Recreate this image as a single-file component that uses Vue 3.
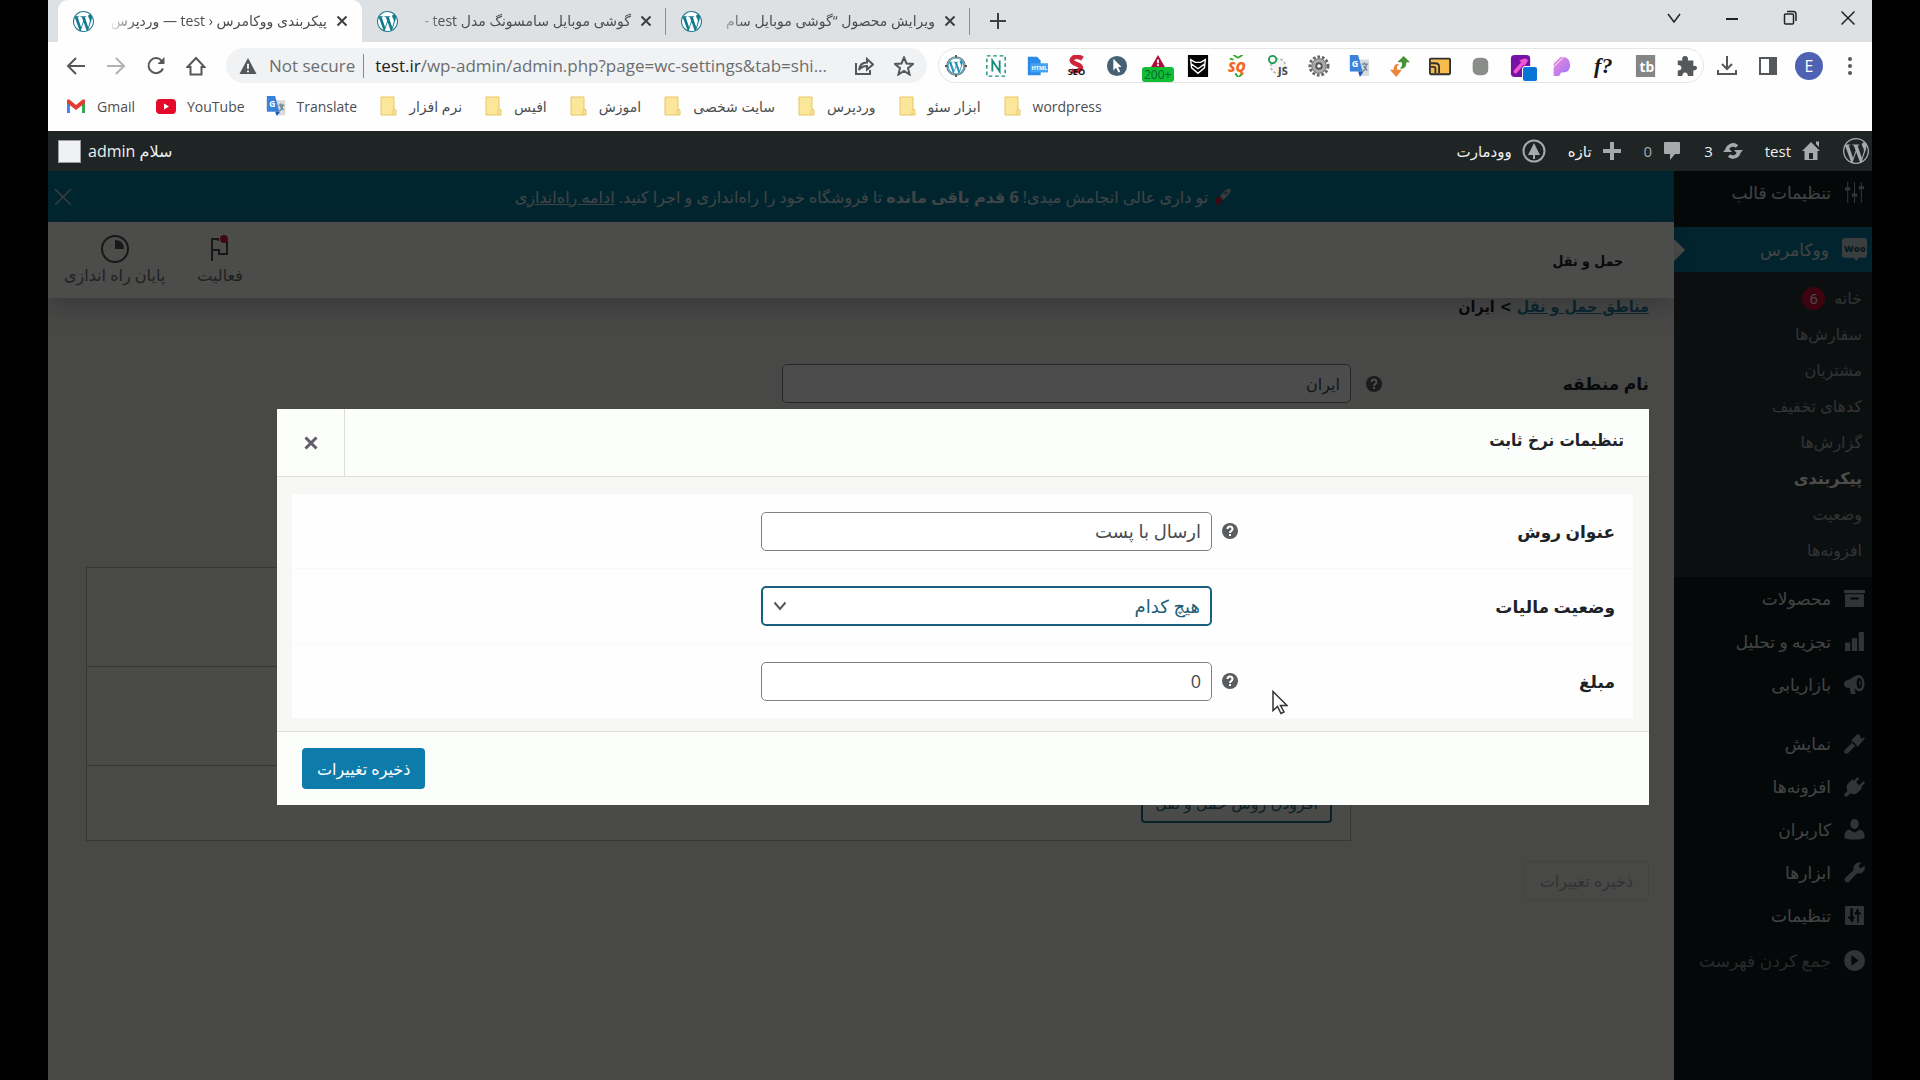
<script setup>
import { ref } from 'vue'

const wpLogo =
  'M21.469 6.825c.84 1.537 1.318 3.3 1.318 5.175 0 3.979-2.156 7.456-5.363 9.325l3.295-9.527c.615-1.54.82-2.771.82-3.864 0-.405-.026-.78-.07-1.11m-7.981.105c.647-.03 1.232-.105 1.232-.105.582-.075.514-.93-.067-.899 0 0-1.755.135-2.88.135-1.064 0-2.85-.15-2.85-.15-.585-.03-.661.855-.075.885 0 0 .54.061 1.125.09l1.68 4.605-2.37 7.08L5.354 6.9c.649-.03 1.234-.1 1.234-.1.585-.075.516-.93-.065-.896 0 0-1.746.138-2.874.138-.2 0-.438-.008-.69-.015C4.911 3.15 8.235 1.215 12 1.215c2.809 0 5.365 1.072 7.286 2.833-.046-.003-.091-.009-.141-.009-1.06 0-1.812.923-1.812 1.914 0 .89.513 1.643 1.06 2.531.411.72.89 1.643.89 2.977 0 .915-.354 1.994-.821 3.479l-1.075 3.585-3.9-11.61.001.014zM12 22.784c-1.059 0-2.081-.153-3.048-.437l3.237-9.406 3.315 9.087c.024.053.05.101.078.149-1.12.393-2.325.609-3.582.609M1.211 12c0-1.564.336-3.05.935-4.39L7.29 21.709C3.694 19.96 1.212 16.271 1.211 12M12 0C5.385 0 0 5.385 0 12s5.385 12 12 12 12-5.385 12-12S18.615 0 12 0'

const tabs = [
  { title: 'پیکربندی ووکامرس ‹ test — وردپرس', active: true },
  { title: 'گوشی موبایل سامسونگ مدل test -', active: false },
  { title: 'ویرایش محصول “گوشی موبایل سام', active: false },
]

const folders = ['نرم افزار', 'افیس', 'اموزش', 'سایت شخصی', 'وردپرس', 'ابزار سئو', 'wordpress']

const submenu = [
  { label: 'خانه', count: 6 },
  { label: 'سفارش‌ها' },
  { label: 'مشتریان' },
  { label: 'کدهای تخفیف' },
  { label: 'گزارش‌ها' },
  { label: 'پیکربندی', current: true },
  { label: 'وضعیت' },
  { label: 'افزونه‌ها' },
]

const storeMenu = [
  { label: 'محصولات', icon: 'M0 2h20v3H0zM1 6h18v12H1zm5 3v2h8V9z' },
  { label: 'تجزیه و تحلیل', icon: 'M1 11h5v8H1zM7.5 7h5v12h-5zM14 1h5v18h-5z' },
  {
    label: 'بازاریابی',
    icon: 'M14 1c3 0 5.5 3.6 5.500 8s-2 7.500-4.500 7.500c-2.200 0-3.600-1.700-5-3.200l1 5.700H6.500L5.500 13H3C1.300 13 0 11.500 0 9.800S1.300 6.500 3 6c4-1 7-5 11-5zm.3 2.500c-1.500 0-2.300 2-2.300 4.800 0 3 1.200 5.700 2.800 5.700s2.500-2.200 2.500-5-1.400-5.500-3-5.500zm.2 3c.9 0 1.500 1 1.500 2.300s-.5 2.200-1.300 2.200z',
  },
]

const systemMenu = [
  { label: 'نمایش', icon: 'M20 5l-7 8-2-1-7 7c-1 1-2.500 1-3.300.2s-.8-2.300.2-3.300L8 9 7 7l6-6 3 1.500L15 4l2 1.500L18.500 4zM8 7.500l4.500 4.500-1 1L7 8.500z' },
  { label: 'افزونه‌ها', icon: 'M13 1l1.500 1.500-3 3.500 3 2.800L18.500 5 20 6.500l-3.800 4.200 1 1-4 4c-2 2-5 2.200-7.200 1L3 19.500H.5V17l3-3C2 12 2 9 4.500 6.500L8 3l1.500 1.500z' },
  { label: 'کاربران', icon: 'M10 0c2.500 0 4 2 4 4.500S12.500 9.500 10 9.500 6 7 6 4.500 7.500 0 10 0zM5 10l5 3 5-3c3 .5 4.500 3 4.500 6v2c-3 2-16 2-19 0v-2c0-3 1.500-5.500 4.500-6z' },
  { label: 'ابزارها', icon: 'M17 5.500l2.500-2.200c1 3-.3 6-2.800 7.200-1.500.7-3 .7-4.200.2L5 18.500c-1 1-2.600 1.200-3.700.2s-1-2.700 0-3.700l7.800-7.500C8.400 4 10.500.8 14.500.5c.7 0 1.500 0 2 .3L14 3.500l.5 2z' },
  { label: 'تنظیمات', icon: 'M1 1h18v18H1zm5 2v8H4v2h2v2l1.500 2L9 15v-2h1v-2H8.500V3zm6.500 14H14V9h2V7h-2V5l-1-2-1.500 2v2H10v2h2.500z' },
]

const methodTitle = ref('ارسال با پست')
const taxStatus = ref('none')
const cost = ref('0')
const zoneName = ref('ایران')
</script>

<template>
  <div class="screen">
    <header class="browser">
      <div class="tab-strip">
        <div v-for="tab in tabs" :key="tab.title" class="tab" :class="{ active: tab.active }">
          <svg class="favicon" viewBox="0 0 24 24"><circle cx="12" cy="12" r="11.5" fill="#fff" /><path :d="wpLogo" fill="#16788f" /></svg>
          <span class="tab-title" dir="rtl">{{ tab.title }}</span>
          <button type="button" class="tab-close" aria-label="Close tab">
            <svg viewBox="0 0 12 12"><path d="M1.5 1.5l9 9M10.5 1.5l-9 9" /></svg>
          </button>
        </div>
        <button type="button" class="new-tab" aria-label="New tab">
          <svg viewBox="0 0 16 16"><path d="M8 0v16M0 8h16" /></svg>
        </button>
        <div class="window-buttons">
          <button type="button" aria-label="Search tabs"><svg viewBox="0 0 16 16"><path d="M2 4l6 8 6-8" /></svg></button>
          <button type="button" aria-label="Minimize"><svg viewBox="0 0 16 16"><path d="M2 9h12" stroke-width="2" /></svg></button>
          <button type="button" aria-label="Restore"><svg viewBox="0 0 16 16"><path d="M3.5 4h7q1 0 1 1v8q0 1-1 1h-7q-1 0-1-1V5q0-1 1-1zM5 1.500h6.500q2.500 0 2.500 3V11" /></svg></button>
          <button type="button" aria-label="Close"><svg viewBox="0 0 16 16"><path d="M1.5 1.5l13 13M14.5 1.5l-13 13" /></svg></button>
        </div>
      </div>

      <div class="toolbar">
        <div class="nav-buttons">
          <button type="button" aria-label="Back"><svg viewBox="0 0 20 20"><path d="M19 10H2M10 2l-8 8 8 8" /></svg></button>
          <button type="button" class="disabled" aria-label="Forward"><svg viewBox="0 0 20 20"><path d="M1 10h17M10 2l8 8-8 8" /></svg></button>
          <button type="button" aria-label="Reload"><svg viewBox="0 0 20 20"><path d="M17 12.5A7.5 7.5 0 1 1 16 5" /><path d="M18.5 1v7h-7z" fill="#55585b" stroke="none" /></svg></button>
          <button type="button" aria-label="Home"><svg viewBox="0 0 20 20"><path d="M1.5 11L10 2l8.5 9h-3v7.5h-11V11z" /></svg></button>
        </div>
        <div class="omnibox">
          <svg class="warn" viewBox="0 0 20 20"><path d="M10 1l9.5 18H.5z" fill="#55585b" /><path d="M10 7.5v5.5M10 15v2" stroke="#fff" stroke-width="2" /></svg>
          <span class="insecure">Not secure</span>
          <span class="url"><b>test.ir</b>/wp-admin/admin.php?page=wc-settings&amp;tab=shi...</span>
          <button type="button" aria-label="Share"><svg viewBox="0 0 20 20"><path d="M2 7v11h14v-4M5 14c.5-5 3-7.500 8-7.500V3l6 5.500-6 5V10c-3.500 0-6 1-8 4z" /></svg></button>
          <button type="button" aria-label="Bookmark"><svg viewBox="0 0 20 20"><path d="M10 1.500l2.500 6 6.500.5-5 4.200 1.600 6.300-5.600-3.500-5.600 3.500L6 12.200 1 8l6.500-.5z" /></svg></button>
        </div>
        <div class="extensions">
          <svg viewBox="0 0 24 24"><circle cx="12" cy="12" r="10" fill="#fff" stroke="#70868e" stroke-width="1.5" /><g transform="translate(3 3) scale(.75)"><path :d="wpLogo" fill="#2891b5" /></g><path d="M12 0v3M12 21v3M0 12h3M21 12h3" stroke="#555" stroke-width="2" /></svg>
          <svg viewBox="0 0 24 24"><rect x="2" y="1" width="20" height="22" fill="none" stroke="#148a7c" stroke-width="1.5" stroke-dasharray="4 3" /><path d="M8 18V6l8 12V6" fill="none" stroke="#148a7c" stroke-width="2" /></svg>
          <svg viewBox="0 0 24 24"><path d="M2 2h10l4 4v16H2z" fill="#2a8be6" /><path d="M5 9h19v10H5z" fill="#47a3f5" /><text x="6" y="16" class="html-label">HTML</text></svg>
          <svg viewBox="0 0 24 24"><path d="M18 4Q12 0 8 3t1 6l5 2q4 2 1 5t-9 1" fill="none" stroke="#cf2739" stroke-width="5" /><text x="2" y="22" class="seo-label">SEO</text></svg>
          <svg viewBox="0 0 24 24"><circle cx="12" cy="12" r="11" fill="#476174" /><path d="M8 4v13l3-3 2.5 5 2-1-2.3-5H17z" fill="#fff" /></svg>
          <span class="alert-ext">
            <svg viewBox="0 0 24 24"><path d="M12 0l8 14H4z" fill="#b3093c" /><path d="M12 5v4M12 10v2" stroke="#fff" stroke-width="2" /></svg>
            <i>200+</i>
          </span>
          <svg viewBox="0 0 24 24"><path d="M1 0h22v24H1z" fill="#050505" /><path d="M4 5l5 3h6l5-3-1 9-7 6-7-6zM5 10l7 5 7-5" fill="none" stroke="#fff" stroke-width="1.5" /></svg>
          <svg viewBox="0 0 24 24"><path d="M7 0l5 3 5-3M3 4l4 1M12 24l-3-4M13 24l4-4" fill="none" stroke="#32a82c" stroke-width="2" /><text x="1" y="18" class="sq-label">SQ</text></svg>
          <svg viewBox="0 0 24 24"><circle cx="11" cy="12" r="8" fill="#f4f4f4" stroke="#bbb" stroke-width="2" stroke-dasharray="3 2" /><circle cx="5" cy="5" r="4" fill="#fff" stroke="#1b9c4f" stroke-width="2" /><text x="11" y="22" class="js-label">JS</text></svg>
          <svg viewBox="0 0 24 24"><circle cx="12" cy="12" r="10" fill="none" stroke="#666" stroke-width="3" stroke-dasharray="3 2" /><circle cx="12" cy="12" r="8" fill="#aaa" stroke="#666" /><circle cx="12" cy="12" r="3" fill="#fff" stroke="#555" stroke-width="2" /></svg>
          <svg viewBox="0 0 24 24"><path d="M9 5h14v18H13z" fill="#d8dadb" /><path d="M2 0h9l5 18H2z" fill="#3b82db" /><path d="M11 18h6l-4 6z" fill="#2457b5" /><path d="M15 10h7M18 8v2M16 18q4-3 4-8M17 12l4 5" stroke="#6c8792" stroke-width="1.5" fill="none" /><text x="4" y="13" class="g-label">G</text></svg>
          <svg viewBox="0 0 24 24"><path d="M16 1l7 7h-4q0 8-7 7 3-3 2-7h-5z" fill="#499336" /><path d="M8 24l-7-8h4q0-7 6-6-3 2-2 6h5z" fill="#ed843b" /></svg>
          <svg viewBox="0 0 24 24"><rect x="1" y="4" width="22" height="17" rx="1" fill="#f6bd4c" stroke="#303030" stroke-width="2" /><path d="M2 9h5q4 0 4 4v7M2 13h3q2 0 2 2v5" fill="none" stroke="#303030" stroke-width="2" /></svg>
          <svg viewBox="0 0 24 24"><rect x="4" y="3" width="17" height="19" rx="6" fill="#8b8d8b" /></svg>
          <span class="picker-ext">
            <svg viewBox="0 0 24 24"><rect x="1" width="21" height="24" rx="4" fill="#7613a5" /><path d="M6 18l7-8" stroke="#f455d5" stroke-width="4" stroke-linecap="round" /><path d="M10 6l6 6 3-5q1-4-4-3z" fill="#f455d5" /></svg>
            <i></i>
          </span>
          <svg viewBox="0 0 24 24"><defs><linearGradient id="pg" x2="1" y2="1"><stop stop-color="#f28bd4" /><stop offset="1" stop-color="#9c72ff" /></linearGradient></defs><path d="M4 8l8-6q10 0 10 9t-10 8l-2 4H4z" fill="url(#pg)" /><path d="M3 6l5-5M3 10l8-8M4 13L15 2" stroke="#fff" stroke-width="1" /></svg>
          <span class="fn-ext">f?</span>
          <svg viewBox="0 0 24 24"><path d="M1 0h21v24H1z" fill="#858585" /><text x="5" y="18" class="tb-label">tb</text></svg>
          <svg viewBox="0 0 24 24"><path d="M3 6h5q-1-5 3-5t3 5h6v6q4-1 4 2t-4 3v6h-6q0-4-3-4t-3 4H3v-6q4 0 4-3t-4-3z" fill="#55585b" /></svg>
        </div>
        <div class="right-tools">
          <button type="button" aria-label="Downloads"><svg viewBox="0 0 20 20"><path d="M10 0v12M5 8l5 5 5-5M1 14v4h18v-4" /></svg></button>
          <button type="button" aria-label="Side panel"><svg viewBox="0 0 20 20"><path d="M2 2h16v16H2z" /><path d="M12 2h6v16h-6z" fill="#55585b" /></svg></button>
          <button type="button" class="profile" aria-label="Profile">E</button>
          <button type="button" aria-label="Menu"><svg viewBox="0 0 20 20"><g fill="#55585b" stroke="none"><circle cx="10" cy="3" r="2" /><circle cx="10" cy="10" r="2" /><circle cx="10" cy="17" r="2" /></g></svg></button>
        </div>
      </div>

      <nav class="bookmarks">
        <a href="#"><svg viewBox="0 0 20 20"><path d="M1 17V5l3 2v10z" fill="#4285f4" /><path d="M16 17V7l3-2v12z" fill="#34a853" /><path d="M1 5q0-3 3-1l6 5 6-5q3-2 3 1v2l-9 7-9-7z" fill="#e23c32" /></svg>Gmail</a>
        <a href="#"><svg viewBox="0 0 20 20"><rect y="3" width="20" height="15" rx="4" fill="#e5092b" /><path d="M8 7.500l5 3-5 3z" fill="#fff" /></svg>YouTube</a>
        <a href="#"><svg viewBox="0 0 24 24"><path d="M9 5h14v18H13z" fill="#d8dadb" /><path d="M1 0h10l5 19H1z" fill="#3b82db" /><path d="M11 19h6l-4 5z" fill="#2457b5" /><path d="M15 11h7M18 9v2M16 18q4-3 4-7M17 12l4 5" stroke="#6c8792" stroke-width="1.5" fill="none" /><text x="4" y="13" class="g-label">G</text></svg>Translate</a>
        <a v-for="folder in folders" :key="folder" href="#">
          <svg viewBox="0 0 20 20"><path d="M3 1h13v12l2 1v5H3z" fill="#fbe69a" stroke="#e6c766" /><path d="M15 19v-4l1.500-2" fill="none" stroke="#e6c766" /></svg>{{ folder }}
        </a>
      </nav>
    </header>

    <div class="wp" dir="rtl">
      <div class="admin-bar">
        <a href="#" aria-label="WordPress"><svg class="big" viewBox="0 0 24 24"><path :d="wpLogo" /></svg></a>
        <a href="#"><svg viewBox="0 0 20 20"><path d="M10 1l9 9h-2.500v9h-13v-9H1zm5-.5h3V6l-3-3zM8 12v6h4v-6z" /></svg>test</a>
        <a href="#"><svg viewBox="0 0 20 20"><path d="M4 10a6 6 0 0 1 10-4.500M16 10a6 6 0 0 1-10 4.500" fill="none" stroke="#a7aaad" stroke-width="3.5" /><path d="M11 9h9l-4.500 5zM0 11h9L4.500 6z" /></svg>3</a>
        <a href="#" class="dim"><svg viewBox="0 0 20 20"><path d="M3 1h14q1 0 1 1v10q0 1-1 1h-4l-5 6v-6H3q-1 0-1-1V2q0-1 1-1z" /></svg>0</a>
        <a href="#"><svg viewBox="0 0 20 20"><path d="M8 1h4v7h7v4h-7v7H8v-7H1V8h7z" /></svg>تازه</a>
        <a href="#"><svg class="wood" viewBox="0 0 24 24"><circle cx="12" cy="12" r="10.5" fill="none" stroke="#a7aaad" stroke-width="2" /><path d="M12 4l6 12h-5v4h-2v-4H6z" /></svg>وودمارت</a>
        <a href="#" class="account">سلام admin<span class="avatar"></span></a>
      </div>

      <div class="workspace">
        <aside class="side-menu">
          <a href="#" class="item"><svg viewBox="0 0 20 20"><path d="M3 0h1v5h2v3H4v12H3V8H1V5h2zM9.500 0h1v11h2v3h-2v6h-1v-6h-2v-3h2zM16 0h1v4h2v3h-2v13h-1V7h-2V4h2z" /></svg>تنظیمات قالب</a>
          <a href="#" class="item open"><svg class="woo" viewBox="0 0 24 24"><path d="M3 1h18q3 0 3 3v13q0 3-3 3h-5l-2 3-3-3H3q-3 0-3-3V4q0-3 3-3z" fill="#c5cfd3" /><text x="2" y="14" class="woo-label">Woo</text></svg>ووکامرس</a>
          <ul class="submenu">
            <li v-for="entry in submenu" :key="entry.label" :class="{ current: entry.current }">
              <a href="#">{{ entry.label }}<span v-if="entry.count" class="count">{{ entry.count }}</span></a>
            </li>
          </ul>
          <a v-for="entry in storeMenu" :key="entry.label" href="#" class="item"><svg viewBox="0 0 20 20"><path :d="entry.icon" fill-rule="evenodd" /></svg>{{ entry.label }}</a>
          <div class="divider"></div>
          <a v-for="entry in systemMenu" :key="entry.label" href="#" class="item"><svg viewBox="0 0 20 20"><path :d="entry.icon" fill-rule="evenodd" /></svg>{{ entry.label }}</a>
          <button type="button" class="item collapse"><svg viewBox="0 0 20 20"><path fill-rule="evenodd" d="M10 0a10 10 0 1 1 0 20 10 10 0 0 1 0-20zM7 5v10l7-5z" /></svg>جمع کردن فهرست</button>
        </aside>

        <main class="content">
          <div class="notice">
            <p>
              <svg viewBox="0 0 20 20"><path d="M3 11l5-1 2 3-1 5-4 1-4 1 1-5z" fill="#c21f45" /><path d="M7 10l6-7q4-3 6-2t-1 6l-7 7z" fill="#b9c3c6" /><circle cx="14" cy="6" r="2" fill="#3e8aa0" /></svg>
              <span>تو داری عالی انجامش میدی! <strong>6 قدم باقی مانده</strong> تا فروشگاه خود را راه‌اندازی و اجرا کنید. <a href="#">ادامه راه‌اندازی</a></span>
            </p>
            <button type="button" aria-label="بستن"><svg viewBox="0 0 18 18"><path d="M1 1l16 16M17 1L1 17" /></svg></button>
          </div>

          <div class="page-header">
            <h1>حمل و نقل</h1>
            <div class="panels">
              <button type="button"><svg viewBox="0 0 28 28"><path d="M6 26V4h6v2M6 15h7v4h8V6" /><circle cx="18" cy="4" r="4" fill="#d0213f" stroke="none" /></svg>فعالیت</button>
              <button type="button"><svg viewBox="0 0 28 28"><circle cx="14" cy="14" r="13" /><path d="M14 5v9h9q0-9-9-9z" fill="#505050" stroke="none" /></svg>پایان راه اندازی</button>
            </div>
          </div>

          <form class="settings" @submit.prevent>
            <h2><a href="#">مناطق حمل و نقل</a> &gt; ایران</h2>
            <div class="zone-row">
              <div class="label-cell">
                <label for="zone-name">نام منطقه</label>
                <svg class="help" viewBox="0 0 16 16"><circle cx="8" cy="8" r="8" /><path d="M5.5 6q0-2.500 2.500-2.500T10.500 6q0 1-1.200 1.800T8 10M8 11v2" /></svg>
              </div>
              <input id="zone-name" v-model="zoneName" type="text" />
            </div>
            <div class="zone-row methods-row">
              <div></div>
              <table class="methods">
                <tbody>
                  <tr><td></td></tr>
                  <tr><td></td></tr>
                  <tr><td><button type="button" class="outline">افزودن روش حمل و نقل</button></td></tr>
                </tbody>
              </table>
            </div>
            <button type="submit" class="save-disabled">ذخیره تغییرات</button>
          </form>
        </main>

        <div class="overlay">
          <section class="modal" role="dialog" aria-labelledby="modal-title">
            <header>
              <h2 id="modal-title">تنظیمات نرخ ثابت</h2>
              <button type="button" aria-label="بستن پنجره"><svg viewBox="0 0 14 14"><path d="M1.5 1.5l11 11M12.5 1.5l-11 11" /></svg></button>
            </header>
            <div class="modal-body">
              <div class="field">
                <div class="label-cell">
                  <label for="method-title">عنوان روش</label>
                  <svg class="help" viewBox="0 0 16 16"><circle cx="8" cy="8" r="8" /><path d="M5.5 6q0-2.500 2.500-2.500T10.500 6q0 1-1.200 1.800T8 10M8 11v2" /></svg>
                </div>
                <input id="method-title" v-model="methodTitle" type="text" />
              </div>
              <div class="field">
                <div class="label-cell"><label for="tax-status">وضعیت مالیات</label></div>
                <div class="select-box">
                  <select id="tax-status" v-model="taxStatus">
                    <option value="none">هیچ کدام</option>
                  </select>
                  <svg viewBox="0 0 14 10"><path d="M1.5 1.5L7 8l5.500-6.500" /></svg>
                </div>
              </div>
              <div class="field">
                <div class="label-cell">
                  <label for="cost">مبلغ</label>
                  <svg class="help" viewBox="0 0 16 16"><circle cx="8" cy="8" r="8" /><path d="M5.5 6q0-2.500 2.500-2.500T10.500 6q0 1-1.200 1.800T8 10M8 11v2" /></svg>
                </div>
                <input id="cost" v-model="cost" type="text" />
              </div>
            </div>
            <footer>
              <button type="button" class="primary">ذخیره تغییرات</button>
            </footer>
          </section>
        </div>
      </div>
    </div>

    <svg class="cursor" viewBox="0 0 16 24"><path d="M1 1v19l4.500-4 3.500 7 3-1.500-3.500-6.500H15z" fill="#fff" stroke="#333" stroke-width="1.5" /></svg>
  </div>
</template>

<style>
body {
  margin: 0;
  background: #000;
}
</style>

<style scoped>
* {
  box-sizing: border-box;
}

.screen {
  position: relative;
  display: flex;
  flex-direction: column;
  min-height: 100vh;
  margin: 0 2.5%;
  overflow: hidden;
  font-family: 'Open Sans', 'DejaVu Sans', sans-serif;
  font-size: 16px;
}

button,
input,
select {
  margin: 0;
  padding: 0;
  border: 0;
  background: none;
  font: inherit;
  color: inherit;
}

a {
  color: inherit;
  text-decoration: none;
}

svg {
  display: block;
  flex: none;
}

svg text {
  direction: ltr;
}

/* browser window */
.browser {
  height: 131px;
  background: #fefefe;
  color: #4b4e51;
}

.tab-strip {
  display: flex;
  height: 42px;
  padding-left: 10px;
  background: #dee1e3;
}

.tab {
  display: flex;
  align-items: center;
  width: 304px;
  padding: 0 13px 0 15px;
  border-right: 1px solid transparent;
}

.tab.active {
  border-radius: 10px 10px 0 0;
  background: #fefefe;
}

.tab:not(.active) {
  border-image: linear-gradient(transparent 9px, #8d9092 9px 34px, transparent 34px) 1;
}

.favicon {
  width: 21px;
  height: 21px;
  margin-right: 13px;
}

.tab-title {
  flex: 1;
  overflow: hidden;
  font-size: 14px;
  line-height: 24px;
  white-space: nowrap;
  mask-image: linear-gradient(to right, transparent, #000 30px);
}

.tab-close {
  margin-left: 9px;
}

.tab-close svg {
  width: 12px;
  height: 12px;
  stroke: #3c3f42;
  stroke-width: 2;
}

.new-tab {
  width: 56px;
}

.new-tab svg {
  width: 16px;
  height: 16px;
  margin: 0 auto;
  stroke: #3c3f42;
  stroke-width: 2;
}

.window-buttons {
  display: flex;
  gap: 10px;
  margin-left: auto;
}

.window-buttons button {
  width: 48px;
  height: 36px;
}

.window-buttons svg {
  width: 16px;
  height: 16px;
  margin: 0 auto;
  fill: none;
  stroke: #222;
  stroke-width: 1.5;
}

.toolbar {
  display: flex;
  align-items: center;
  height: 47px;
  padding-left: 8px;
}

.toolbar button svg {
  width: 20px;
  height: 20px;
  margin: 0 auto;
  fill: none;
  stroke: #55585b;
  stroke-width: 2;
}

.nav-buttons {
  display: flex;
  width: 170px;
}

.nav-buttons button,
.omnibox button {
  width: 40px;
}

.nav-buttons .disabled {
  opacity: 0.45;
}

.omnibox {
  display: flex;
  flex: 1;
  align-items: center;
  height: 35px;
  margin-right: 11px;
  padding: 0 3px 0 12px;
  border-radius: 18px;
  background: #f1f2f3;
  font-size: 17px;
  white-space: nowrap;
}

.warn {
  width: 20px;
  height: 18px;
}

.insecure {
  margin: 0 11px;
  padding-right: 8px;
  border-right: 1px solid #85888a;
  color: #6b6e70;
  line-height: 24px;
}

.url {
  flex: 1;
  color: #6b6e70;
}

.url b {
  font-weight: 400;
  color: #222;
}

.extensions {
  display: flex;
  align-items: center;
  justify-content: space-between;
  width: 766px;
  height: 35px;
  padding: 0 5px;
  border: 1px solid #e3e5e6;
  border-radius: 18px;
}

.extensions svg,
.extensions span {
  width: 24px;
  height: 22px;
}

.alert-ext,
.picker-ext {
  position: relative;
}

.extensions i {
  position: absolute;
  font-style: normal;
}

.alert-ext i {
  top: 12px;
  left: -4px;
  width: 32px;
  border-radius: 3px;
  background: #10bd35;
  color: #063;
  font-size: 12px;
  line-height: 15px;
  text-align: center;
}

.picker-ext i {
  top: 11px;
  left: 13px;
  width: 16px;
  height: 16px;
  border: 1px solid #fff;
  border-radius: 3px;
  background: #0875d6;
}

.html-label {
  fill: #fff;
  font: 700 6px 'Open Sans', sans-serif;
}

.seo-label {
  fill: #1a1014;
  font: 700 10px 'Open Sans', sans-serif;
}

.sq-label {
  fill: #f06a1e;
  font: italic 800 15px 'Open Sans', sans-serif;
}

.js-label {
  fill: #444;
  font: 700 12px 'Open Sans', sans-serif;
}

.g-label {
  fill: #fff;
  font: 700 10px 'Open Sans', sans-serif;
}

.tb-label {
  fill: #fff;
  font: 700 15px 'Open Sans', sans-serif;
}

.extensions .fn-ext {
  width: 28px;
  color: #181818;
  font: italic 700 22px/22px 'Liberation Serif', serif;
  text-align: center;
}

.right-tools {
  display: flex;
  align-items: center;
  gap: 1px;
  padding: 0 2px 0 3px;
}

.right-tools button {
  width: 40px;
}

.right-tools .profile {
  width: 28px;
  height: 28px;
  margin: 0 6px;
  border-radius: 50%;
  background: #4f61b3;
  color: #fff;
  font-size: 16px;
}

.bookmarks {
  display: flex;
  gap: 21px;
  height: 34px;
  padding-left: 18px;
  font-size: 14px;
  white-space: nowrap;
}

.bookmarks a {
  display: flex;
  align-items: center;
  gap: 11px;
}

.bookmarks svg {
  width: 20px;
  height: 20px;
}

/* admin bar */
.wp {
  display: flex;
  flex: 1;
  flex-direction: column;
}

.admin-bar {
  display: flex;
  align-items: center;
  height: 40px;
  padding: 0 3px 0 10px;
  background: #1f2425;
  color: #eef0f0;
  font-size: 15px;
}

.admin-bar a {
  display: flex;
  align-items: center;
  gap: 10px;
  margin-left: 22px;
}

.admin-bar svg {
  width: 20px;
  height: 20px;
  fill: #a7aaad;
}

.admin-bar .big {
  width: 26px;
  height: 26px;
}

.admin-bar .wood {
  width: 24px;
  height: 24px;
}

.admin-bar .dim {
  color: #a7aaad;
}

.admin-bar .account {
  gap: 7px;
  margin: 0 auto 0 0;
  font-size: 16px;
}

.avatar {
  width: 23px;
  height: 23px;
  border: 1px solid #9a9d9f;
  background: #eff1f2;
}

/* side menu */
.workspace {
  position: relative;
  display: grid;
  flex: 1;
  grid-template-columns: 198px 1fr;
  align-items: stretch;
}

.side-menu {
  background: #131b20;
  color: #dfe0e0;
  font-size: 17px;
}

.item {
  display: flex;
  align-items: center;
  gap: 13px;
  width: 100%;
  height: 43px;
  padding-right: 7px;
  white-space: nowrap;
}

.item svg {
  width: 21px;
  height: 21px;
  fill: #a7aaad;
}

.open {
  position: relative;
  height: 45px;
  margin-top: 13px;
  padding-right: 5px;
  background: #067a9b;
}

.open .woo {
  width: 25px;
  height: 25px;
}

.open::after {
  position: absolute;
  top: 12px;
  left: 0;
  border: 11px solid transparent;
  border-right-width: 0;
  border-left-color: #fff;
  content: '';
}

.woo-label {
  fill: #1c576d;
  font: 800 9px 'Open Sans', sans-serif;
}

.submenu {
  margin: 0;
  padding: 8px 10px 9px;
  background: #2a3338;
  color: #a5a9ab;
  font-size: 16px;
  list-style: none;
}

.submenu a {
  display: flex;
  align-items: center;
  gap: 9px;
  height: 36px;
}

.submenu .current {
  color: #fff;
  font-weight: 700;
}

.count {
  width: 23px;
  border-radius: 12px;
  background: #d10c36;
  color: #fff;
  font-size: 14px;
  line-height: 23px;
  text-align: center;
}

.divider {
  height: 16px;
}

.collapse {
  height: 46px;
  color: #85898c;
}

/* page */
.content {
  background: #f0f1ec;
  color: #1d2327;
}

.notice {
  display: flex;
  align-items: center;
  height: 51px;
  padding-left: 6px;
  background: #067e9f;
  color: #d9e4e8;
}

.notice p {
  display: flex;
  flex: 1;
  align-items: center;
  justify-content: center;
  gap: 6px;
  margin: 0;
  white-space: nowrap;
}

.notice p svg {
  width: 17px;
  height: 17px;
}

.notice a {
  text-decoration: underline;
}

.notice button svg {
  width: 18px;
  height: 18px;
  stroke: #c4ced2;
  stroke-width: 1.5;
}

.page-header {
  position: relative;
  display: flex;
  align-items: center;
  justify-content: space-between;
  height: 76px;
  padding: 2px 51px 0 16px;
  background: #fefefb;
  box-shadow: 0 8px 24px rgba(30, 30, 60, 0.25);
}

.page-header h1,
.settings h2,
.modal h2 {
  font-family: 'DejaVu Sans Condensed', 'DejaVu Sans', sans-serif;
}

.page-header h1 {
  margin: 0;
  font-size: 14px;
}

.panels {
  display: flex;
  gap: 32px;
}

.panels button {
  color: #6f7175;
  line-height: 24px;
}

.panels svg {
  width: 28px;
  height: 28px;
  margin: 0 auto;
  fill: none;
  stroke: #505050;
  stroke-width: 2;
}

.settings {
  padding: 0 25px 0 38px;
}

.settings h2 {
  margin: -8px 0 40px;
  font-size: 16px;
  line-height: 34px;
}

.settings h2 a {
  color: #2a7fa3;
  text-decoration: underline;
}

.zone-row {
  display: grid;
  grid-template-columns: 298px 1fr;
}

.label-cell {
  display: flex;
  align-items: center;
  justify-content: space-between;
  font-size: 17px;
  font-weight: 700;
}

.zone-row .label-cell {
  padding-left: 15px;
}

.help {
  width: 16px;
  height: 16px;
  fill: #5a5d60;
  stroke: #fff;
  stroke-width: 2;
}

.help circle {
  stroke: none;
}

.help path {
  fill: none;
}

input[type='text'],
select {
  width: 45%;
  height: 39px;
  padding: 0 10px;
  border: 1px solid #7f8285;
  border-radius: 5px;
  background: #fff;
  color: #484c50;
}

.methods-row {
  margin-top: 164px;
}

.methods {
  width: 100%;
  border: 1px solid #b4b7b4;
  border-spacing: 0;
  background: #f9f9f6;
}

.methods td {
  height: 99px;
  padding: 0;
  border-bottom: 1px solid #b4b7b4;
}

.methods tr:last-child td {
  height: 74px;
  padding: 0 18px;
  border: 0;
}

.outline {
  height: 39px;
  padding: 0 12px;
  border: 2px solid #296c88;
  border-radius: 4px;
  color: #296c88;
}

.save-disabled {
  height: 40px;
  margin-top: 20px;
  padding: 0 15px;
  border: 1px solid #dadcdd;
  border-radius: 4px;
  color: #a7aaad;
}

/* modal */
.overlay {
  position: absolute;
  inset: 0;
  padding: 238px 223px 0 229px;
  background: rgba(0, 0, 0, 0.7);
}

.modal {
  background: #fcfefb;
  color: #1d2327;
}

.modal header {
  display: flex;
  justify-content: space-between;
  height: 68px;
  border-bottom: 1px solid #dcdddc;
}

.modal h2 {
  margin: 0;
  padding-right: 25px;
  font-size: 17px;
  line-height: 62px;
}

.modal header button {
  width: 68px;
  border-right: 1px solid #dcdddc;
}

.modal header svg {
  width: 14px;
  height: 14px;
  margin: 0 auto;
  stroke: #5f5d66;
  stroke-width: 3;
}

.modal-body {
  padding: 17px 16px 12px 15px;
  background: #f7f8f6;
}

.field {
  display: grid;
  grid-template-columns: 421px 1fr;
  align-items: center;
  height: 75px;
  border-bottom: 1px solid #f8f8f8;
  background: #fefefe;
}

.field .label-cell {
  padding: 0 18px 0 10px;
}

.field input {
  width: 49%;
  font-size: 18px;
}

.select-box {
  position: relative;
  width: 49%;
}

.select-box select {
  width: 100%;
  height: 40px;
  border: 2px solid #19607c;
  appearance: none;
  color: #225d78;
  font-size: 18px;
}

.select-box svg {
  position: absolute;
  top: 15px;
  left: 12px;
  width: 14px;
  height: 10px;
  fill: none;
  stroke: #55585b;
  stroke-width: 2;
}

.modal footer {
  display: flex;
  justify-content: flex-end;
  height: 74px;
  padding: 16px 25px;
  border-top: 1px solid #dcdddc;
}

.primary {
  height: 41px;
  padding: 0 15px;
  border-radius: 4px;
  background: #0d7cab;
  color: #fff;
}

.cursor {
  position: absolute;
  top: 690px;
  left: 1224px;
  width: 16px;
  height: 25px;
}
</style>
